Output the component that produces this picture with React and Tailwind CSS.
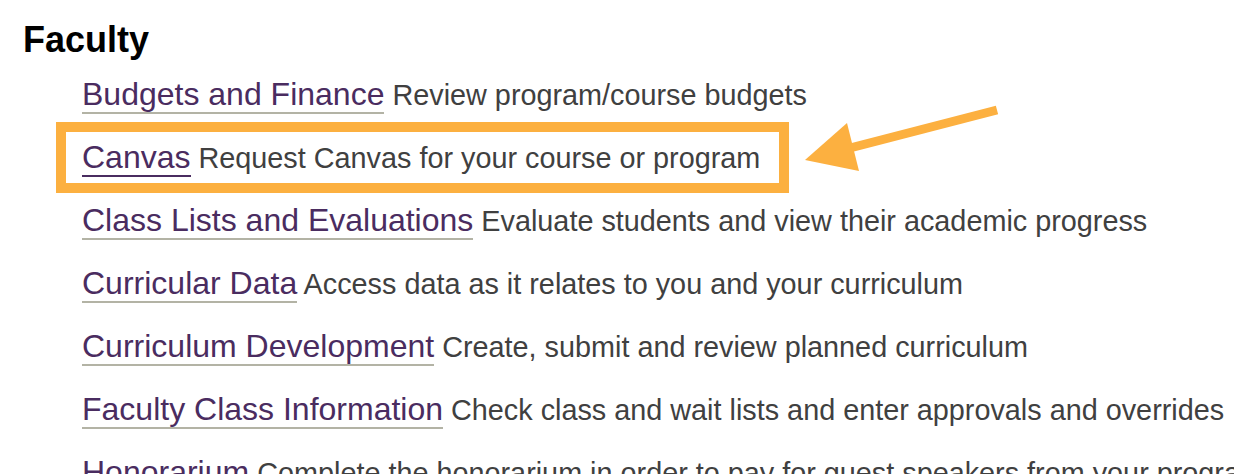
import React from 'react';

const links = [
    { title: "Budgets and Finance", text: "Review program/course budgets" },
    { title: "Canvas", text: "Request Canvas for your course or program", active: true },
    { title: "Class Lists and Evaluations", text: "Evaluate students and view their academic progress" },
    { title: "Curricular Data", text: "Access data as it relates to you and your curriculum" },
    { title: "Curriculum Development", text: "Create, submit and review planned curriculum" },
    { title: "Faculty Class Information", text: "Check class and wait lists and enter approvals and overrides" },
    { title: "Honorarium", text: "Complete the honorarium in order to pay for guest speakers from your program" },
];

const Arrow = function () {

    return (
        <svg className="absolute left-[790px] top-[90px] pointer-events-none" width="220" height="100" viewBox="790 90 220 100">
            <line x1="997" y1="110" x2="850" y2="148" stroke="#fcb040" strokeWidth="9" />
            <polygon points="805,160 847,123 859,171" fill="#fcb040" />
        </svg>
    );
}

export default function App() {

    return (

        <div className="relative w-[1234px] h-[474px] overflow-hidden bg-white font-['Liberation_Sans',Arial,sans-serif]">

            <div className="pt-5 pl-[23px]">

                <h2 className="text-[36px] leading-[40px] font-bold text-black">Faculty</h2>

                <ul className="mt-[3px] pl-[59px]">

                    {links.map((link, index) => {

                        return (

                            <li key={index} className="h-[63px] text-[32px] leading-[63px] whitespace-nowrap">
                                <a
                                    href="#"
                                    className={"leading-none text-[#4a2c60] border-b-2 " + (link.active ? "border-[#4a2c60]" : "border-[#b3b3a5]")}
                                >
                                    {link.title}
                                </a>
                                <span className="text-[28.8px] leading-none text-[#404040]"> {link.text}</span>
                            </li>

                        )

                    })}

                </ul>

            </div>

            {/* highlight box */}
            <div className="absolute left-[56px] top-[122px] w-[733px] h-[71px] border-[10px] border-[#fcb040] pointer-events-none" />

            <Arrow />

        </div>

    );
}
